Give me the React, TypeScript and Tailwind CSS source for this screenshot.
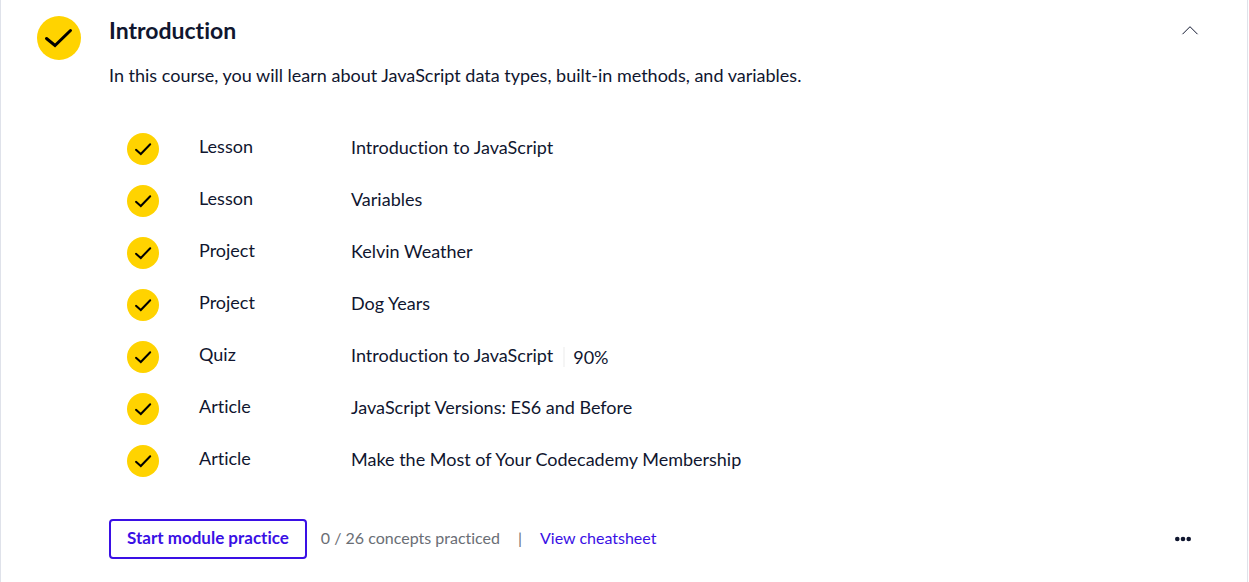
type Item = { kind: string; title: string; score?: string };

const items: Item[] = [
  { kind: 'Lesson', title: 'Introduction to JavaScript' },
  { kind: 'Lesson', title: 'Variables' },
  { kind: 'Project', title: 'Kelvin Weather' },
  { kind: 'Project', title: 'Dog Years' },
  { kind: 'Quiz', title: 'Introduction to JavaScript', score: '90%' },
  { kind: 'Article', title: 'JavaScript Versions: ES6 and Before' },
  { kind: 'Article', title: 'Make the Most of Your Codecademy Membership' },
];

function CompletedLarge() {
  return (
    <svg className="size-11 shrink-0" viewBox="0 0 44 44" fill="none" role="img" aria-label="Completed">
      <circle cx="22" cy="22" r="22" fill="#ffd300" />
      <path d="M9.500 22.500 18 29.500 33.500 14.500" stroke="#000" strokeWidth="3" strokeLinecap="round" />
    </svg>
  );
}

function CompletedSmall() {
  return (
    <svg className="size-8 shrink-0" viewBox="0 0 32 32" fill="none" role="img" aria-label="Completed">
      <circle cx="16" cy="16" r="16" fill="#ffd300" />
      <path d="M9 16.800 13.800 21 23.200 11.200" stroke="#000" strokeWidth="2" strokeLinecap="round" />
    </svg>
  );
}

export default function App() {
  return (
    <main className="mr-px flex min-h-screen gap-7 border-x border-[#dfe2ea] bg-white pt-4 pr-12 pb-6 pl-9 font-['Lato',sans-serif] text-lg text-[#10162f] [font-variant-ligatures:none]">
      <CompletedLarge />
      <section className="min-w-0 flex-1">
        <header className="flex items-center justify-between">
          <h2 className="text-[23px] leading-7 font-bold">Introduction</h2>
          <button type="button" aria-label="Collapse module" aria-expanded="true" className="flex h-7 items-center">
            <svg className="size-5" viewBox="0 0 20 20" fill="none" aria-hidden="true">
              <path d="M3.500 14.200 11 6.700l7.500 7.500" stroke="#10162f" strokeWidth="1" />
            </svg>
          </button>
        </header>
        <p className="mt-4 leading-[30px]">
          In this course, you will learn about JavaScript data types, built-in methods, and variables.
        </p>
        <ul className="mt-[33px] pl-[18px]">
          {items.map((item, i) => (
            <li key={i} className="flex h-[52px] items-center">
              <CompletedSmall />
              <span className="ml-10 w-[152px] pb-1.5">{item.kind}</span>
              <a href="#" className="pb-1">{item.title}</a>
              {item.score && (
                <span className="ml-2.5 border-l-2 border-[#f5f5f5] pl-2 leading-5">{item.score}</span>
              )}
            </li>
          ))}
        </ul>
        <footer className="mt-8 flex items-center text-base">
          <button type="button" className="h-10 rounded border-2 border-[#3a10e5] px-4 pb-0.5 text-[17px] font-bold text-[#3a10e5]">
            Start module practice
          </button>
          <span className="ml-3.5 pb-0.5 text-[#6a6e75]">0 / 26 concepts practiced</span>
          <span className="mx-[18px] pb-0.5 text-[#6a6e75]">|</span>
          <a href="#" className="pb-0.5 text-[#3a10e5]">View cheatsheet</a>
          <button type="button" aria-label="More options" className="mr-2 ml-auto">
            <svg className="h-4 w-4" viewBox="0 0 16 16" fill="#10162f" aria-hidden="true">
              <circle cx="2.300" cy="8" r="2.300" />
              <circle cx="8" cy="8" r="2.300" />
              <circle cx="13.700" cy="8" r="2.300" />
            </svg>
          </button>
        </footer>
      </section>
    </main>
  );
}
